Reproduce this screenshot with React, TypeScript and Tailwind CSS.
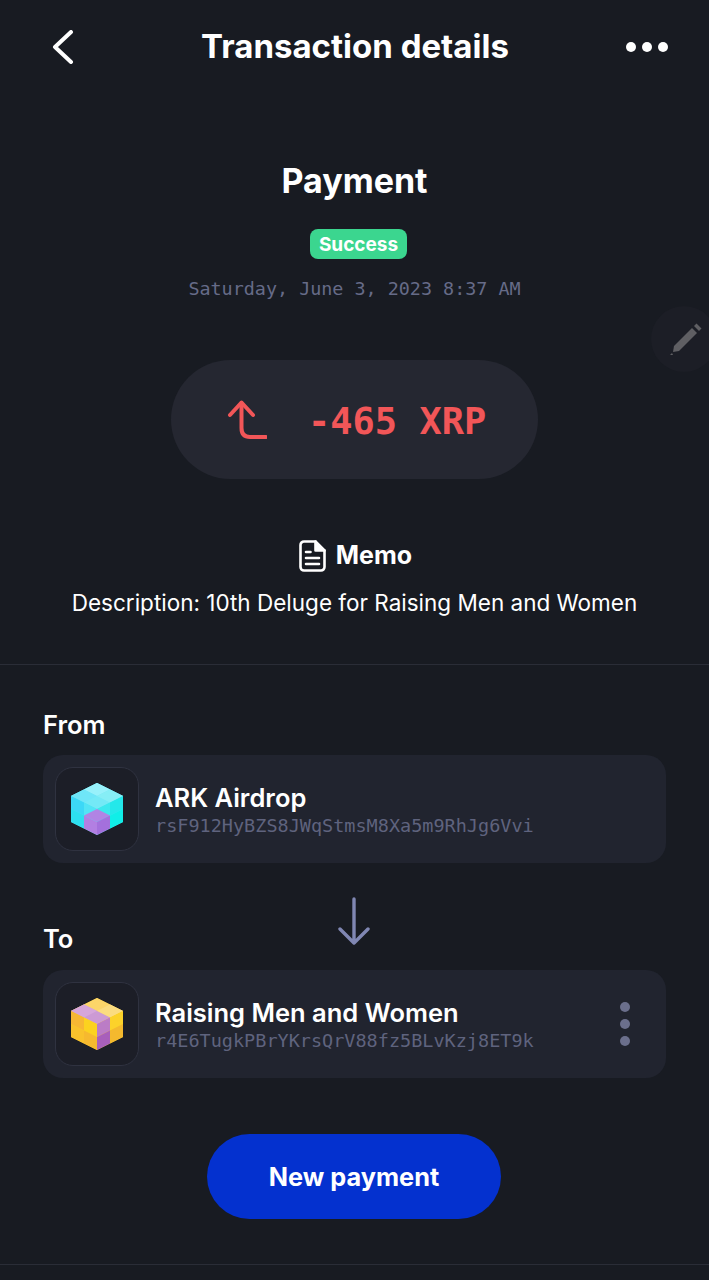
const MONO = "font-['DejaVu_Sans_Mono',monospace]";

function ArkCube() {
  return (
    <svg width="54" height="54" viewBox="0 0 54 54">
      <polygon points="27,1 53,14 53,40 27,53 1,40 1,14" fill="#4fe9f2" />
      <polygon points="27,1 53,14 27,27 1,14" fill="#74e9f6" />
      <polygon points="27,1 40,7.5 27,14 14,7.5" fill="#98f1fb" />
      <polygon points="14,7.5 27,14 14,20.5 1,14" fill="#6fe6f8" />
      <polygon points="40,7.5 53,14 40,20.5 27,14" fill="#86eef6" />
      <polygon points="1,14 14,20.5 14,33.5 1,27" fill="#3cd8f7" />
      <polygon points="14,20.5 27,27 27,40 14,33.5" fill="#52e4f5" />
      <polygon points="1,27 14,33.5 14,46.5 1,40" fill="#2ddff0" />
      <polygon points="27,27 40,20.5 40,33.5 27,40" fill="#3ce8ee" />
      <polygon points="40,20.5 53,14 53,27 40,33.5" fill="#24e8ea" />
      <polygon points="40,33.5 53,27 53,40 40,46.5" fill="#10eee8" />
      <polygon points="27,27 40,33.5 27,40 14,33.5" fill="#b184e4" />
      <polygon points="14,33.5 27,40 27,53 14,46.5" fill="#b27fe2" />
      <polygon points="27,40 40,33.5 40,46.5 27,53" fill="#a470dc" />
    </svg>
  );
}

function RaisingCube() {
  return (
    <svg width="54" height="54" viewBox="0 0 54 54">
      <polygon points="27,1 53,14 53,40 27,53 1,40 1,14" fill="#fbd027" />
      <polygon points="27,1 53,14 27,27 1,14" fill="#fcd569" />
      <polygon points="40,7.5 53,14 40,20.5 27,14" fill="#fbdc80" />
      <polygon points="1,14 14,7.5 40,20.5 27,27" fill="#cc9ad4" />
      <polygon points="14,7.5 27,14 14,20.5 1,14" fill="#d6a6da" />
      <polygon points="1,14 14,20.5 14,33.5 1,27" fill="#f7b733" />
      <polygon points="14,20.5 27,27 27,40 14,33.5" fill="#fcd21f" />
      <polygon points="1,27 14,33.5 14,46.5 1,40" fill="#f9c22c" />
      <polygon points="14,33.5 27,40 27,53 14,46.5" fill="#f6b92f" />
      <polygon points="27,27 40,20.5 40,33.5 27,40" fill="#bb7cc6" />
      <polygon points="27,40 40,33.5 40,46.5 27,53" fill="#a85fbb" />
      <polygon points="40,20.5 53,14 53,27 40,33.5" fill="#fcd22a" />
      <polygon points="40,33.5 53,27 53,40 40,46.5" fill="#f4b92e" />
    </svg>
  );
}

function AccountCard({
  name,
  address,
  icon,
  menu,
}: {
  name: string;
  address: string;
  icon: React.ReactNode;
  menu?: boolean;
}) {
  return (
    <div className="h-[108px] rounded-[20px] bg-[#21242f] flex items-center pl-3 pr-[36px]">
      <div className="w-[84px] h-[84px] rounded-[18px] border border-[#2f3240] bg-[#1c1e27] flex items-center justify-center shrink-0">
        {icon}
      </div>
      <div className="flex-1 min-w-0 pl-[16px] pt-[1px]">
        <div className="text-[25.5px] leading-[32px] font-semibold text-white">{name}</div>
        <div className={`${MONO} text-[18.5px] leading-[24px] text-[#5f637e]`}>{address}</div>
      </div>
      {menu && (
        <div className="flex flex-col gap-[7px]">
          <span className="w-[10px] h-[10px] rounded-full bg-[#6b6f8c]" />
          <span className="w-[10px] h-[10px] rounded-full bg-[#6b6f8c]" />
          <span className="w-[10px] h-[10px] rounded-full bg-[#6b6f8c]" />
        </div>
      )}
    </div>
  );
}

export default function App() {
  return (
    <div className="relative w-[709px] h-[1280px] overflow-hidden bg-[#181b22] text-white font-['Inter',sans-serif]">
      {/* Header */}
      <div className="h-[94px] flex items-center justify-between pl-[52px] pr-[41px]">
        <svg width="22" height="34" viewBox="0 0 22 34" fill="none" stroke="#fff" strokeWidth="4" strokeLinecap="round" strokeLinejoin="round">
          <path d="M19 2 L3 17 L19 32" />
        </svg>
        <h1 className="ml-[10px] text-[33px] font-bold">Transaction details</h1>
        <div className="flex gap-[6px]">
          <span className="w-[10px] h-[10px] rounded-full bg-white" />
          <span className="w-[10px] h-[10px] rounded-full bg-white" />
          <span className="w-[10px] h-[10px] rounded-full bg-white" />
        </div>
      </div>

      {/* Summary */}
      <div className="flex flex-col items-center pt-[65px] h-[571px] border-b border-[#2a2d37]">
        <h2 className="text-[34px] leading-[44px] font-bold">Payment</h2>
        <div className="mt-[26px] ml-[8px] h-[30px] px-[9px] pt-[2px] rounded-[8px] bg-[#3bd68f] flex items-center text-[19px] font-bold">
          Success
        </div>
        <div className={`${MONO} mt-[18px] text-[18.4px] leading-[24px] text-[#666b88]`}>
          Saturday, June 3, 2023 8:37 AM
        </div>
        <div className="mt-[59px] w-[367px] h-[119px] rounded-full bg-[#252731] flex items-center pl-[56px] gap-[41px]">
          <svg width="40" height="40" viewBox="0 0 40 40" fill="none" stroke="#f25658" strokeWidth="4" strokeLinecap="round" strokeLinejoin="round">
            <path d="M3 15 L14.5 2.5 L26 15" />
            <path d="M14.5 3 V28 Q14.5 37 23 37 H39" />
          </svg>
          <span className={`${MONO} text-[37px] pt-[5px] font-bold text-[#f25658]`}>-465 XRP</span>
        </div>
        <div className="mt-[58px] ml-[2px] flex items-center gap-[10px]">
          <svg width="27" height="32" viewBox="0 0 27 32" fill="none" stroke="#fff" strokeWidth="2.6" strokeLinecap="round" strokeLinejoin="round">
            <path d="M5 1.5 H16.5 L25.5 10.5 V27 A3.5 3.5 0 0 1 22 30.5 H5 A3.5 3.5 0 0 1 1.5 27 V5 A3.5 3.5 0 0 1 5 1.5 Z" />
            <path d="M16.5 1.5 V10.5 H25.5" fill="#fff" />
            <path d="M7 12 H11.5 M7 18 H20 M7 24 H20" />
          </svg>
          <span className="text-[25px] font-bold">Memo</span>
        </div>
        <p className="mt-[13px] text-[22.5px] leading-[30px] text-white">
          Description: 10th Deluge for Raising Men and Women
        </p>
      </div>

      {/* From / To */}
      <div className="px-[43px] pt-[45px]">
        <div className="text-[25.5px] leading-[30px] font-semibold mb-[15px]">From</div>
        <AccountCard name="ARK Airdrop" address="rsF912HyBZS8JWqStmsM8Xa5m9RhJg6Vvi" icon={<ArkCube />} />
        <div className="relative mt-[32px] mb-[15px] h-[60px] flex items-end">
          <span className="mb-[1px] text-[25.5px] leading-[30px] font-semibold">To</span>
          <svg className="absolute left-[295px] top-[2px]" width="32" height="48" viewBox="0 0 32 48" fill="none" stroke="#8087b3" strokeWidth="3.4" strokeLinecap="round" strokeLinejoin="round">
            <path d="M16 2 V46 M2 32 L16 46 L30 32" />
          </svg>
        </div>
        <AccountCard name="Raising Men and Women" address="r4E6TugkPBrYKrsQrV88fz5BLvKzj8ET9k" icon={<RaisingCube />} menu />
      </div>

      {/* Action */}
      <div className="flex justify-center pt-[56px] pr-[1px]">
        <button type="button" className="w-[294px] h-[85px] rounded-full bg-[#0431cf] text-[25.3px] font-bold text-white">
          New payment
        </button>
      </div>
      <div className="mt-[45px] border-t border-[#2a2d37]" />

      {/* Floating edit button */}
      <div className="absolute left-[651px] top-[306px] w-[66px] h-[66px] rounded-full bg-[#1c1e26] flex items-center justify-center">
        <svg width="34" height="34" viewBox="0 0 34 34" className="ml-[3px]">
          <polygon points="5,24 23,6 28,11 10,29 4,30" fill="#5f5f63" />
          <polygon points="25,4 27.5,1.5 32.5,6.5 30,9" fill="#5f5f63" />
          <polygon points="1,33 3,31 4,33" fill="#5f5f63" />
        </svg>
      </div>
    </div>
  );
}
